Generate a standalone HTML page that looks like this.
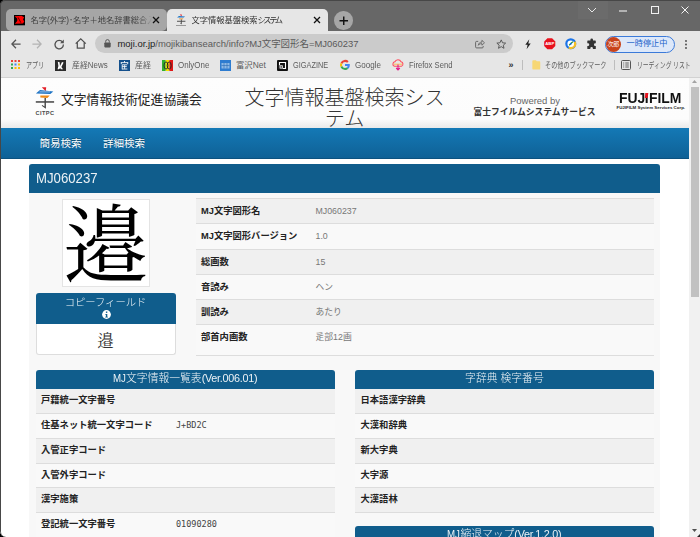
<!DOCTYPE html>
<html lang="ja">
<head>
<meta charset="utf-8">
<title>文字情報基盤検索システム</title>
<style>
*{box-sizing:border-box;margin:0;padding:0}
html,body{width:700px;height:537px;overflow:hidden;background:#000}
body{font-family:"Liberation Sans","Noto Sans CJK JP",sans-serif;position:relative;color:#222}
.a{position:absolute;white-space:nowrap}
svg{position:absolute;overflow:visible}
#win{position:absolute;left:0;top:0;width:700px;height:537px;background:#676767;border-radius:5px 0 0 6px;overflow:hidden}
#edge{position:absolute;left:0;top:0;width:702px;height:537.5px;border:1.2px solid #474747;border-radius:5px 0 0 6px;pointer-events:none}
#in{position:absolute;left:0;top:0;width:700px;height:537px}
/* tab strip */
.tab{position:absolute;top:8.5px;height:22.5px;font-size:8.25px;line-height:23px;white-space:nowrap}
#tab1{left:6px;width:160.5px;background:#a6a6a6;color:#404040;border-radius:5px}
#tab2{left:167px;width:161px;background:#e6e6e6;color:#333;border-radius:5px 5px 0 0}
.tab .ttl{position:absolute;top:0;overflow:hidden;-webkit-mask-image:linear-gradient(90deg,#000 calc(100% - 12px),transparent);mask-image:linear-gradient(90deg,#000 calc(100% - 12px),transparent)}
#toolbar{position:absolute;left:0;top:31px;width:700px;height:26px;background:#e6e6e6}
#bm{position:absolute;left:0;top:57px;width:700px;height:20.5px;background:#e6e6e6;border-bottom:1px solid #d2d2d2;font-size:8.6px;color:#444}
#omni{position:absolute;left:94.5px;top:34px;width:418px;height:19px;border-radius:9.5px;background:#cbcbcb}
.bmi{position:absolute;top:57px;line-height:16.5px;white-space:nowrap;font-size:8.4px;color:#5c5c5c;transform-origin:0 50%}
.k{letter-spacing:-2.4px}
#t2 .r,#t3 .r{height:24.7px;line-height:23.6px}
/* page */
#page{position:absolute;left:0;top:77.5px;width:689px;height:460px;background:#fff;overflow:hidden}
#pin{position:absolute;left:0;top:-77.5px;width:700px;height:537px}
#sb{position:absolute;left:689px;top:77.5px;width:11px;height:460px;background:#f1f1f1}
#hdr{position:absolute;left:0;top:77.5px;width:689px;height:50px;background:linear-gradient(#fdfdfd,#fcfcfc 82%,#e9e9e9)}
#nav{position:absolute;left:0;top:127.5px;width:689px;height:31px;background:linear-gradient(#1479b6,#0f6196);border-bottom:1px solid #0c5280;color:#fff;font-size:10.5px;line-height:31px;text-shadow:0 -1px 0 rgba(0,0,0,.35)}
.ph{position:absolute;background:#105d8c;color:#fff;white-space:nowrap}
.tbl{position:absolute;font-size:9.3px}
.tbl .r{height:25.1px;line-height:24px;border-top:1px solid #ddd;position:relative;white-space:nowrap;background:#f9f9f9}
.tbl .r.o{background:#f0f0f0}
.tbl .r b{position:absolute;left:5.5px;color:#222}
.tbl .r span{position:absolute;color:#777;font-size:8.8px}
.mono{font-family:"DejaVu Sans Mono","Liberation Mono",monospace;font-size:8.5px !important;color:#444 !important}
</style>
</head>
<body>
<div id="win"><div id="in">
  <!-- ======= tab strip ======= -->
  <div class="tab" id="tab1">
    <svg style="left:8px;top:6.400px" width="11" height="10.300" viewBox="0 0 11 10.300"><rect width="11" height="10.300" fill="#000"/><path d="M.64 1.290L7.500 .86 10.070 2.360 9 4.500 10.290 6.430 9 8.570.86 8.790 3.210 6V3.430z" fill="#f00"/><path d="M4.070 2.360L6.860 7.710" stroke="#200" stroke-width=".75"/></svg>
    <div class="ttl" style="left:24.5px;width:121px">名字(外字)･名字＋地名辞書総合入</div>
    <svg style="left:146px;top:7.5px" width="8" height="8" viewBox="0 0 8 8"><path d="M1 1l6 6M7 1L1 7" stroke="#111" stroke-width="1.3" fill="none"/></svg>
  </div>
  <div class="tab" id="tab2">
    <svg style="left:8.500px;top:5.500px" width="10" height="11" viewBox="6 6 21 24"><path d="M13.800 7.200h4.400l-.5 4.100z" fill="#e3202a"/><path d="M12 10.100l13.300 1.400-3 2.400-14.400-.3z" fill="#1f74c4"/><path d="M12.300 15.600h9.400l-2.300 2.300-7.100-.4z" fill="#ef8a17"/><rect x="7.800" y="20.800" width="18.300" height="2" fill="#444"/><path d="M16.200 17.900h1.900v10.900l-4.200-3.100.6-.8 1.700 1.200z" fill="#444"/></svg>
    <div class="a" style="left:8.500px;top:16px;width:10px;height:1px;background:#999"></div>
    <div class="ttl" style="left:24.5px;width:112px">文字情報基盤検索<span class="k">システム</span></div>
    <svg style="left:146px;top:7.5px" width="8" height="8" viewBox="0 0 8 8"><path d="M1 1l6 6M7 1L1 7" stroke="#111" stroke-width="1.3" fill="none"/></svg>
  </div>
  <div class="a" style="left:334px;top:11px;width:18.5px;height:18.5px;border-radius:50%;background:#a6a6a6"></div>
  <svg style="left:338.5px;top:15.5px" width="9.5" height="9.5" viewBox="0 0 10 10"><path d="M5 .5v9M.5 5h9" stroke="#111" stroke-width="1.5" fill="none"/></svg>
  <!-- window controls -->
  <div class="a" style="left:578px;top:1px;width:30px;height:18px;background:rgba(255,255,255,.03)"></div>
  <svg style="left:587px;top:7px" width="10" height="6" viewBox="0 0 10 6"><path d="M1 1l4 4 4-4" stroke="#e8e8e8" stroke-width="1" fill="none"/></svg>
  <svg style="left:619px;top:10px" width="8" height="2" viewBox="0 0 8 2"><path d="M0 1h8" stroke="#fff" stroke-width="1"/></svg>
  <svg style="left:650.5px;top:6px" width="8" height="8" viewBox="0 0 8 8"><rect x=".5" y=".5" width="7" height="7" stroke="#f0f0f0" stroke-width="1" fill="none"/></svg>
  <svg style="left:681px;top:6px" width="8" height="8" viewBox="0 0 8 8"><path d="M.5 .5l7 7M7.500 .5l-7 7" stroke="#f4f4f4" stroke-width="1" fill="none"/></svg>

  <!-- ======= toolbar ======= -->
  <div id="toolbar"></div>
  <div id="omni"></div>
  <div class="a" id="url" style="left:117.5px;top:35px;line-height:18px;font-size:9.45px;color:#5a5a5a"><span style="color:#1d1d1d">moji.or.jp</span>/mojikibansearch/info?MJ文字図形名=MJ060237</div>

  <!-- nav icons -->
  <svg style="left:10.5px;top:39px" width="10" height="10" viewBox="0 0 10 10"><path d="M9.6 5H1.2M5 .8L.9 5 5 9.200" stroke="#555" stroke-width="1.25" fill="none"/></svg>
  <svg style="left:32px;top:39px" width="10" height="10" viewBox="0 0 10 10"><path d="M.4 5h8.400M5 .8L9.100 5 5 9.200" stroke="#b4b4b4" stroke-width="1.25" fill="none"/></svg>
  <svg style="left:53.500px;top:38.500px" width="10.500" height="10.500" viewBox="0 0 10.500 10.500"><path d="M8.600 3.200A4.200 4.200 0 1 0 9.400 5.600" stroke="#505050" stroke-width="1.300" fill="none"/><path d="M9.800 .6v3.700H6.100z" fill="#505050"/></svg>
  <svg style="left:74.500px;top:38px" width="11.500" height="11" viewBox="0 0 11.500 11"><path d="M.7 5.600L5.750 .9l5.050 4.700M2.300 4.600v5.600h6.900V4.600" stroke="#505050" stroke-width="1.250" fill="none"/></svg>
  <!-- lock -->
  <svg style="left:103.500px;top:39px" width="7" height="8.500" viewBox="0 0 7 8.500"><rect x=".3" y="3.400" width="6.400" height="5" rx=".8" fill="#555"/><path d="M1.700 3.600V2.400a1.800 1.800 0 0 1 3.600 0v1.200" stroke="#555" stroke-width="1" fill="none"/></svg>
  <!-- share -->
  <svg style="left:474.500px;top:39px" width="10" height="9.500" viewBox="0 0 10 9.500"><path d="M3.200 2.400H1.600a1 1 0 0 0-1 1v4.500a1 1 0 0 0 1 1h5.600a1 1 0 0 0 1-1V7" stroke="#5c5c5c" stroke-width=".9" fill="none"/><path d="M3.300 6.300c.2-2 1.500-3.100 3.600-3.200V1.300L9.500 3.800 6.900 6.200V4.600C5.300 4.600 4.200 5.100 3.300 6.300z" stroke="#5c5c5c" stroke-width=".8" fill="none" stroke-linejoin="round"/></svg>
  <!-- star -->
  <svg style="left:495.500px;top:38.500px" width="10.500" height="10" viewBox="0 0 10.500 10"><path d="M5.250 .9l1.300 2.900 3.100.3-2.350 2.100.7 3.100-2.750-1.650L2.500 9.300l.7-3.100L.85 4.100l3.100-.3z" stroke="#555" stroke-width=".95" fill="none" stroke-linejoin="round"/></svg>
  <!-- lightning -->
  <svg style="left:524px;top:38.500px" width="8" height="10.500" viewBox="0 0 8 10.500"><path d="M5.300 .3L1.300 5.800h2.300L2.600 10.200l4.100-5.800H4.300z" fill="#222"/></svg>
  <!-- ABP -->
  <svg style="left:543.500px;top:38px" width="11.500" height="11.500" viewBox="0 0 11.500 11.500"><path d="M3.400 .2h4.700l3.200 3.200v4.700l-3.200 3.200H3.400L.2 8.100V3.400z" fill="#e8121d"/><text x="5.750" y="7.400" font-size="4.300" font-weight="bold" fill="#fff" text-anchor="middle" font-family="Liberation Sans,sans-serif">ABP</text></svg>
  <!-- blue circle ext -->
  <svg style="left:564.500px;top:38px" width="11.500" height="11.500" viewBox="0 0 11.500 11.500"><circle cx="5.750" cy="5.750" r="5.500" fill="#1a73e8"/><path d="M10.600 3.200A5.500 5.500 0 0 1 3.200 10.600L5.750 5.750z" fill="#f6c026"/><circle cx="5.750" cy="5.750" r="3.300" fill="#fff"/><path d="M4.200 7.300L7.900 3.600" stroke="#1e8e3e" stroke-width="1.300"/><circle cx="5.750" cy="5.750" r=".9" fill="#1a73e8"/></svg>
  <!-- puzzle -->
  <svg style="left:586px;top:38px" width="11" height="11.500" viewBox="0 0 11 11.500"><path d="M4.400 1.800a1.300 1.300 0 0 1 2.600 0v.6h2.200a.6.600 0 0 1 .6.600v2.300h-.5a1.350 1.350 0 0 0 0 2.700h.5v2.400a.6.600 0 0 1-.6.600H6.900v-.6a1.300 1.300 0 0 0-2.600 0v.6H1.900a.6.600 0 0 1-.6-.6V8h.6a1.350 1.350 0 0 0 0-2.700h-.6V3a.6.600 0 0 1 .6-.6h2.500z" fill="#333"/></svg>
  <!-- profile pill -->
  <div class="a" style="left:604.500px;top:36px;width:70px;height:16.500px;border-radius:8.500px;background:#dde8f9;border:1px solid #3b7ad9"></div>
  <div class="a" style="left:605.800px;top:36.800px;width:15px;height:15px;border-radius:50%;background:#c8421a;color:#fff;font-size:6px;line-height:15px;text-align:center;letter-spacing:-.3px">次郎</div>
  <div class="a" style="left:626.500px;top:36px;line-height:16.500px;font-size:8.200px;color:#1b62c9">一時停止中</div>
  <!-- dots -->
  <svg style="left:685px;top:39.500px" width="2" height="9" viewBox="0 0 2 9"><circle cx="1" cy="1" r=".9" fill="#444"/><circle cx="1" cy="4.500" r=".9" fill="#444"/><circle cx="1" cy="8" r=".9" fill="#444"/></svg>
  <div id="bm"></div>

  <!-- ======= bookmarks ======= -->
  <svg style="left:11px;top:60px" width="9" height="9" viewBox="0 0 9 9"><g><rect x="0" y="0" width="2" height="2" fill="#ea4335"/><rect x="3.500" y="0" width="2" height="2" fill="#ea4335"/><rect x="7" y="0" width="2" height="2" fill="#ea4335"/><rect x="0" y="3.500" width="2" height="2" fill="#34a853"/><rect x="3.500" y="3.500" width="2" height="2" fill="#4285f4"/><rect x="7" y="3.500" width="2" height="2" fill="#fbbc05"/><rect x="0" y="7" width="2" height="2" fill="#34a853"/><rect x="3.500" y="7" width="2" height="2" fill="#fbbc05"/><rect x="7" y="7" width="2" height="2" fill="#fbbc05"/></g></svg>
  <div class="bmi" id="b1" style="transform:scaleX(0.725);left:26px">アプリ</div>
  <svg style="left:55px;top:59.500px" width="11" height="11" viewBox="0 0 11 11"><rect width="11" height="11" fill="#2b2b2b"/><path d="M2.800 1.800l1.800.4.400 3.800 2-4 1.600.6-2.200 4.400 1.600 2.300H5.800l-.6-1.300L4 9.300H2.600L3.400 6z" fill="#fff"/></svg>
  <div class="bmi" id="b2" style="transform:scaleX(0.944);left:71.500px">産経News</div>
  <svg style="left:118.500px;top:59.500px" width="11" height="11" viewBox="0 0 11 11"><rect width="11" height="11" fill="#14508c"/><path d="M5.500 1v1.500M1.800 2.600h7.400M2.300 2.600v1.600M8.700 2.600v1.600M3.200 4.800h5M3.200 4.800v4.600M3.200 6.600h4.600M5.600 5.200v3.600M3.200 9h5.200" stroke="#fff" stroke-width=".85" fill="none"/></svg>
  <div class="bmi" id="b3" style="transform:scaleX(0.946);left:135px">産経</div>
  <svg style="left:161.500px;top:59.500px" width="11" height="11" viewBox="0 0 11 11"><rect width="3.700" height="11" fill="#2fb12f"/><rect x="3.700" width="3.700" height="11" fill="#f2e200"/><rect x="7.400" width="3.600" height="11" fill="#e01818"/><ellipse cx="4" cy="5.500" rx="2" ry="3.600" stroke="#222" stroke-width=".9" fill="none"/><ellipse cx="7.200" cy="5.500" rx="2" ry="3.600" stroke="#222" stroke-width=".9" fill="none"/></svg>
  <div class="bmi" id="b4" style="transform:scaleX(0.949);left:177.500px">OnlyOne</div>
  <svg style="left:220px;top:59.500px" width="11" height="11" viewBox="0 0 11 11"><rect width="11" height="11" fill="#2e7cd0"/><rect x="1.500" y="3" width="8" height="5.500" fill="#8db9e6"/><path d="M1.500 5.500h8M4 3v5.500M7 3v5.500" stroke="#2a6ab3" stroke-width=".6"/></svg>
  <div class="bmi" id="b5" style="transform:scaleX(1.0);left:236px">富沢Net</div>
  <svg style="left:276.500px;top:59.500px" width="11" height="11" viewBox="0 0 11 11"><rect width="11" height="11" rx="1" fill="#111"/><path d="M2.500 2.500h6v6h-6z" stroke="#fff" stroke-width="1.100" fill="none"/><rect x="2" y="5.300" width="3.700" height="3.700" fill="#111"/><rect x="3" y="5.800" width="2.300" height="2.300" fill="none" stroke="#fff" stroke-width=".9"/></svg>
  <div class="bmi" id="b6" style="transform:scaleX(0.878);left:293px">GIGAZINE</div>
  <svg style="left:339.500px;top:60px" width="10" height="10" viewBox="0 0 10 10"><path d="M5 1.900c.9 0 1.600.3 2.200.8l1.400-1.400A5 5 0 0 0 .55 2.750l1.650 1.250A3 3 0 0 1 5 1.900z" fill="#ea4335"/><path d="M2.200 4A3 3 0 0 0 2.200 6L.55 7.250a5 5 0 0 1 0-4.500z" fill="#fbbc05"/><path d="M5 10a4.800 4.800 0 0 0 3.300-1.200L6.700 7.500c-.45.300-1 .5-1.700.5A3 3 0 0 1 2.200 6L.55 7.250A5 5 0 0 0 5 10z" fill="#34a853"/><path d="M9.800 5c0-.35 0-.6-.1-.9H5v1.900h2.700c-.1.600-.45 1.100-1 1.500l1.600 1.300C9.250 7.900 9.800 6.600 9.800 5z" fill="#4285f4"/></svg>
  <div class="bmi" id="b7" style="transform:scaleX(0.959);left:355px">Google</div>
  <svg style="left:392px;top:59.500px" width="12" height="11" viewBox="0 0 12 11"><path d="M2.600 6.300A2.300 2.300 0 0 1 2.900 1.800 3.300 3.300 0 0 1 9 1.700a2.400 2.400 0 0 1 .4 4.600z" fill="none" stroke="#ff4f5e" stroke-width="1.100"/><path d="M2 4.200h8" stroke="#ffbd4f" stroke-width="1"/><path d="M6 4.500v5.300M4.200 8L6 9.900 7.800 8" stroke="#e31587" stroke-width="1.100" fill="none"/></svg>
  <div class="bmi" id="b8" style="transform:scaleX(0.914);left:408.500px">Firefox Send</div>
  <div class="bmi" style="left:508.500px;font-size:9px;color:#333;font-weight:bold">»</div>
  <div class="a" style="left:522px;top:60px;width:1px;height:10px;background:#bdbdbd"></div>
  <svg style="left:531.500px;top:60px" width="8.500" height="9.700" viewBox="0 0 9.500 11"><path d="M.3 1.300a1 1 0 0 1 1-1h3l1 1.200h3a1 1 0 0 1 1 1V10a.7.700 0 0 1-.7.700H1A.7.700 0 0 1 .3 10z" fill="#f7d774"/></svg>
  <div class="bmi" id="b9" style="transform:scaleX(0.734);left:545px">その他のブックマーク</div>
  <div class="a" style="left:613.500px;top:60px;width:1px;height:10px;background:#bdbdbd"></div>
  <svg style="left:621px;top:60px" width="10" height="10" viewBox="0 0 10 10"><rect x=".5" y=".5" width="9" height="9" rx="1" stroke="#555" stroke-width="1" fill="none"/><path d="M2.200 3h1M4.300 3h3.500M2.200 5h1M4.300 5h3.500M2.200 7h1M4.300 7h3.500" stroke="#555" stroke-width=".9"/></svg>
  <div class="bmi" id="b10" style="transform:scaleX(0.694);left:637px">リーディング リスト</div>

  <!-- ======= page ======= -->
  <div id="page"><div id="pin">
    <div id="hdr"></div>
    <!-- CITPC logo -->
    <svg style="left:28px;top:80px" width="40" height="40" viewBox="0 0 40 40"><path d="M13.800 7.200h4.400l-.5 4.100z" fill="#e3202a"/><path d="M12 10.100l13.300 1.400-3 2.400-14.400-.3z" fill="#1f74c4"/><path d="M11.500 11.900h10.500" stroke="#fff" stroke-width=".55"/><path d="M12.300 15.600h9.400l-2.300 2.300-7.100-.4z" fill="#ef8a17"/><rect x="7.800" y="21.200" width="18.300" height="1.500" fill="#444"/><path d="M16.500 17.900h1.400v10.900l-4.200-3.100.6-.8 2.200 1.500z" fill="#444"/></svg>
    <div class="a" id="citpc" style="left:35.400px;top:110.300px;font-size:5.600px;line-height:6px;font-weight:bold;color:#4a4a4a;letter-spacing:.45px">CITPC</div>
    <div class="a" id="h1" style="left:61px;top:90px;font-size:12.800px;color:#222;line-height:20px">文字情報技術促進協議会</div>
    <div class="a" id="h2" style="left:239.500px;top:87.500px;width:210px;text-align:center;font-size:20px;line-height:21.600px;color:#333;font-weight:300;white-space:normal">文字情報基盤検索システム</div>
    <div class="a" id="h3" style="left:475px;top:95px;width:120px;text-align:center;font-size:9.500px;color:#666;line-height:11.500px">Powered by</div>
    <div class="a" id="h4" style="left:473.500px;top:106px;font-size:8.750px;font-weight:bold;color:#333;line-height:12px">富士フイルムシステムサービス</div>
    <div class="a" id="h5" style="left:619px;top:90px;font-size:14.400px;font-weight:bold;color:#111;line-height:16px;transform-origin:0 50%;transform:scaleX(.967)">FUJ<span style="position:relative;letter-spacing:.3px;margin-left:-.6px">I<i style="position:absolute;left:.35px;top:2.800px;width:3.300px;height:5px;background:#e8121d;transform:skewX(-8deg)"></i></span>FILM</div>
    <div class="a" id="h6" style="left:616.500px;top:105px;font-size:4.400px;font-weight:bold;color:#222;line-height:6px">FUJIFILM System Services Corp.</div>
    <div id="nav"><span class="a" style="left:39.500px">簡易検索</span><span class="a" style="left:103px">詳細検索</span></div>

    <div class="a" style="left:29px;top:164px;width:631px;height:400px;background:#f8f8f8"></div>
    <div class="ph" style="left:29px;top:164px;width:631px;height:28.500px;border-radius:3px 3px 0 0"></div>
    <div class="a" id="pt" style="left:36px;top:164px;font-size:15px;line-height:28.500px;color:#fff;font-weight:normal;transform-origin:0 50%;transform:scaleX(.88);opacity:.92">MJ060237</div>

    <div class="a" id="glyph" style="left:62px;top:199px;width:87.500px;height:87.500px;background:#fff;border:1px solid #e4e4e4;font-family:'Liberation Serif','Noto Serif CJK SC',serif;font-size:85px;line-height:94px;text-align:center;color:#000;overflow:hidden">邉</div>

    <div class="ph" style="left:35.500px;top:293px;width:140px;height:31px;border-radius:3px 3px 0 0"></div>
    <div class="a" id="cf" style="left:35.500px;top:296.500px;width:140px;text-align:center;font-size:10.300px;line-height:12px;color:#fff;opacity:.95;font-weight:300">コピーフィールド</div>
    <svg style="left:101.500px;top:310px" width="9" height="9" viewBox="0 0 9 9"><circle cx="4.500" cy="4.500" r="4.400" fill="#fff"/><rect x="3.900" y="1.500" width="1.400" height="1.400" fill="#105d8c"/><path d="M3.300 3.900h2v2.900h.6v.8H3.200v-.8h.7V4.700h-.6z" fill="#105d8c"/></svg>
    <div class="a" style="left:35.500px;top:324px;width:140px;height:30.500px;background:#fff;border:1px solid #ddd;border-top:0;border-radius:0 0 3px 3px;text-align:center;font-family:'Liberation Serif','Noto Serif CJK SC',serif;font-size:16.500px;line-height:35px;color:#333">邉</div>

    <div class="tbl" id="t1" style="left:195.500px;top:198.400px;width:458px">
      <div class="r o"><b>MJ文字図形名</b><span style="left:120px">MJ060237</span></div>
      <div class="r"><b>MJ文字図形バージョン</b><span style="left:120px">1.0</span></div>
      <div class="r o"><b>総画数</b><span style="left:120px">15</span></div>
      <div class="r"><b>音読み</b><span style="left:120px">ヘン</span></div>
      <div class="r o"><b>訓読み</b><span style="left:120px">あたり</span></div>
      <div class="r" style="height:31.500px"><b>部首内画数</b><span style="left:120px">辵部12画</span></div>
      <div class="r" style="height:1px"></div>
    </div>

    <div class="ph" style="left:35.500px;top:369.500px;width:299.500px;height:19px;border-radius:3px 3px 0 0"></div>
    <div class="a" id="p2" style="left:35.500px;top:369.500px;width:299.500px;text-align:center;font-size:10.800px;line-height:16.500px;color:#fff;opacity:.92;font-weight:300"><span style="display:inline-block;transform:scaleX(.9);transform-origin:0 50%;margin-right:-1.400px">MJ</span>文字情報一覧表<span style="letter-spacing:-.25px">(Ver.006.01)</span></div>
    <div class="tbl" id="t2" style="left:35.500px;top:388.500px;width:299.500px">
      <div class="r o" style="border-top:0"><b>戸籍統一文字番号</b></div>
      <div class="r"><b>住基ネット統一文字コード</b><span class="mono" style="left:140.500px">J+BD2C</span></div>
      <div class="r o"><b>入管正字コード</b></div>
      <div class="r"><b>入管外字コード</b></div>
      <div class="r o"><b>漢字施策</b></div>
      <div class="r"><b>登記統一文字番号</b><span class="mono" style="left:140.500px">01090280</span></div>
    </div>

    <div class="ph" style="left:355px;top:369.500px;width:298.800px;height:19px;border-radius:3px 3px 0 0"></div>
    <div class="a" id="p3" style="left:355px;top:369.500px;width:298.800px;text-align:center;font-size:10.800px;line-height:16.500px;color:#fff;opacity:.92;font-weight:300">字辞典 検字番号</div>
    <div class="tbl" id="t3" style="left:355px;top:388.500px;width:298.800px">
      <div class="r o" style="border-top:0"><b>日本語漢字辞典</b></div>
      <div class="r"><b>大漢和辞典</b></div>
      <div class="r o"><b>新大字典</b></div>
      <div class="r"><b>大字源</b></div>
      <div class="r o"><b>大漢語林</b></div>
      <div class="r" style="height:1px"></div>
    </div>
    <div class="ph" style="left:355px;top:526px;width:298.800px;height:19px;border-radius:3px 3px 0 0"></div>
    <div class="a" id="p4" style="left:355px;top:526px;width:298.800px;text-align:center;font-size:10.800px;line-height:16.500px;color:#fff;opacity:.92;font-weight:300"><span style="display:inline-block;transform:scaleX(.9);transform-origin:0 50%;margin-right:-1.400px">MJ</span>縮退マップ<span style="letter-spacing:-.25px">(Ver.1.2.0)</span></div>
  </div></div>
  <!-- scrollbar -->
  <div id="sb"></div>
  <div class="a" style="left:690.500px;top:87px;width:8px;height:209.500px;background:#c1c1c1"></div>
  <svg style="left:692px;top:80px" width="5" height="3" viewBox="0 0 5 3"><path d="M0 3l2.500-3L5 3z" fill="#a3a3a3"/></svg>
  <svg style="left:692px;top:529px" width="5" height="3" viewBox="0 0 5 3"><path d="M0 0l2.500 3L5 0z" fill="#505050"/></svg>
<svg style="left:697px;top:534px" width="3" height="3" viewBox="0 0 3 3"><path d="M3 0v3H0z" fill="#222"/></svg>
</div><div id="edge"></div></div>
</body>
</html>
